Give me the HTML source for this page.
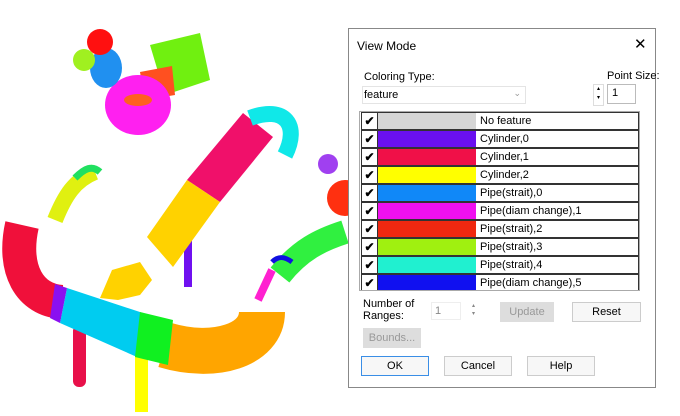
<!DOCTYPE html><html><head><style>
body{margin:0;width:680px;height:416px;background:#fff;position:relative;overflow:hidden;font-family:"Liberation Sans",sans-serif;font-size:11px;color:#000}
.a{position:absolute}
.dlg{left:348px;top:28px;width:308px;height:360px;border:1px solid #888;background:#fff;box-sizing:border-box}
.row{position:absolute;left:361px;width:276px;height:16px;border:1px solid #333;background:#fff}
.row .cb{position:absolute;left:0;top:0;width:15px;height:16px;border-right:1px solid #333;font-size:12px;line-height:16px;text-align:center;font-weight:bold}
.row .sw{position:absolute;left:16px;top:0;width:98px;height:16px}
.row .t{position:absolute;left:118px;top:2px;font-size:11px}
.btn{position:absolute;border:1px solid #ccc;background:#f0f0f0;text-align:center;font-size:11px;line-height:18px;height:18px}
</style></head><body>
<svg class="a" style="left:0;top:0" width="350" height="416">
<g fill="none" stroke-linecap="butt">
<rect x="73" y="325" width="13" height="62" rx="6" fill="#e8104a"/>
<rect x="135" y="350" width="13" height="62" fill="#ffff00"/>
<rect x="184" y="240" width="8" height="47" fill="#7010f0"/>
<path d="M62 302 C30 300 12 270 22 225" stroke="#f0103a" stroke-width="34"/>
<path d="M165 345 C215 360 262 345 262 312" stroke="#ffa500" stroke-width="46"/>
<polygon points="67,288 143,313 137,357 60,323" fill="#00ccf0"/>
<polygon points="55,284 67,288 60,323 50,318" fill="#8a10f0"/>
<polygon points="140,312 173,320 168,365 135,357" fill="#10f020"/>
<polygon points="187,180 243,113 273,137 220,202" fill="#f0106a"/>
<polygon points="147,237 187,180 220,202 173,267" fill="#ffd200"/>
<polygon points="100,298 112,270 140,262 152,280 140,295 118,300" fill="#ffd200"/>
<path d="M250 118 C285 105 300 125 285 155" stroke="#10e8e8" stroke-width="16"/>
<polygon points="150,45 200,33 210,80 165,95" fill="#70f010"/>
<polygon points="140,72 172,66 175,95 145,100" fill="#ff5020"/>
<ellipse cx="138" cy="105" rx="33" ry="30" fill="#ff20f0"/>
<ellipse cx="138" cy="100" rx="14" ry="6" fill="#ff6020"/>
<ellipse cx="106" cy="68" rx="16" ry="20" fill="#2090f0"/>
<circle cx="100" cy="42" r="13" fill="#ff1010"/>
<circle cx="84" cy="60" r="11" fill="#a0f020"/>
<path d="M55 220 C65 195 75 180 95 172" stroke="#e0f010" stroke-width="16"/>
<path d="M75 178 C85 168 92 165 100 172" stroke="#20e060" stroke-width="7"/>
<path d="M280 275 C300 250 320 240 345 232" stroke="#30f040" stroke-width="24"/>
<path d="M272 262 C278 256 284 256 292 262" stroke="#1010e0" stroke-width="5"/>
<path d="M258 300 L272 270" stroke="#ff20d0" stroke-width="8"/>
<circle cx="328" cy="164" r="10" fill="#a040f0"/>
<ellipse cx="345" cy="198" rx="18" ry="18" fill="#ff3010"/>
</g></svg>
<div class="a dlg"></div>
<div class="a" style="left:357px;top:39px;font-size:12px">View Mode</div>
<div class="a" style="left:634px;top:35px;font-size:15px">✕</div>
<div class="a" style="left:364px;top:71px">Coloring Type:</div>
<div class="a" style="left:607px;top:70px">Point Size:</div>
<div class="a" style="left:362px;top:86px;width:162px;height:16px;border:1px solid #e4e4e4;background:#fff"><span style="position:absolute;left:1px;top:2px">feature</span><span style="position:absolute;right:4px;top:1px;color:#999;font-size:9px">⌄</span></div>
<div class="a" style="left:593px;top:84px;width:9px;height:20px;border:1px solid #ddd;font-size:6px;line-height:9px;text-align:center">▴<br>▾</div>
<div class="a" style="left:607px;top:84px;width:29px;height:20px;border:1px solid #bbb;padding-left:4px;box-sizing:border-box;line-height:17px">1</div>
<div class="a" style="left:359px;top:111px;width:281px;height:180px;overflow:hidden;border:1px solid #aaa;box-sizing:border-box"></div>
<div class="a" style="left:0;top:0;width:680px;height:290px;overflow:hidden">
<div class="row" style="top:112px"><div class="cb">✔</div><div class="sw" style="background:#d6d6d6"></div><div class="t">No feature</div></div>
<div class="row" style="top:130px"><div class="cb">✔</div><div class="sw" style="background:#6a10f0"></div><div class="t">Cylinder,0</div></div>
<div class="row" style="top:148px"><div class="cb">✔</div><div class="sw" style="background:#f01048"></div><div class="t">Cylinder,1</div></div>
<div class="row" style="top:166px"><div class="cb">✔</div><div class="sw" style="background:#ffff00"></div><div class="t">Cylinder,2</div></div>
<div class="row" style="top:184px"><div class="cb">✔</div><div class="sw" style="background:#1088f8"></div><div class="t">Pipe(strait),0</div></div>
<div class="row" style="top:202px"><div class="cb">✔</div><div class="sw" style="background:#f010f0"></div><div class="t">Pipe(diam change),1</div></div>
<div class="row" style="top:220px"><div class="cb">✔</div><div class="sw" style="background:#f02810"></div><div class="t">Pipe(strait),2</div></div>
<div class="row" style="top:238px"><div class="cb">✔</div><div class="sw" style="background:#a0f010"></div><div class="t">Pipe(strait),3</div></div>
<div class="row" style="top:256px"><div class="cb">✔</div><div class="sw" style="background:#20f0d0"></div><div class="t">Pipe(strait),4</div></div>
<div class="row" style="top:274px"><div class="cb">✔</div><div class="sw" style="background:#1010f0"></div><div class="t">Pipe(diam change),5</div></div>
</div>
<div class="a" style="left:363px;top:298px;line-height:12px">Number of<br>Ranges:</div>
<div class="a" style="left:431px;top:302px;width:30px;height:18px;border:1px solid #eee;color:#888;padding-left:3px;box-sizing:border-box;line-height:16px">1</div>
<div class="a" style="left:472px;top:302px;font-size:6px;line-height:8px;color:#888">▴<br>▾</div>
<div class="btn" style="left:500px;top:302px;width:52px;color:#999;background:#ddd;border-color:#ddd">Update</div>
<div class="btn" style="left:572px;top:302px;width:67px;background:#f7f7f7">Reset</div>
<div class="btn" style="left:363px;top:328px;width:56px;color:#999;background:#ddd;border-color:#ddd">Bounds...</div>
<div class="btn" style="left:361px;top:356px;width:66px;border-color:#3a8ee6;background:#f7f7f7">OK</div>
<div class="btn" style="left:444px;top:356px;width:66px;background:#f7f7f7">Cancel</div>
<div class="btn" style="left:527px;top:356px;width:66px;background:#f7f7f7">Help</div>
</body></html>
